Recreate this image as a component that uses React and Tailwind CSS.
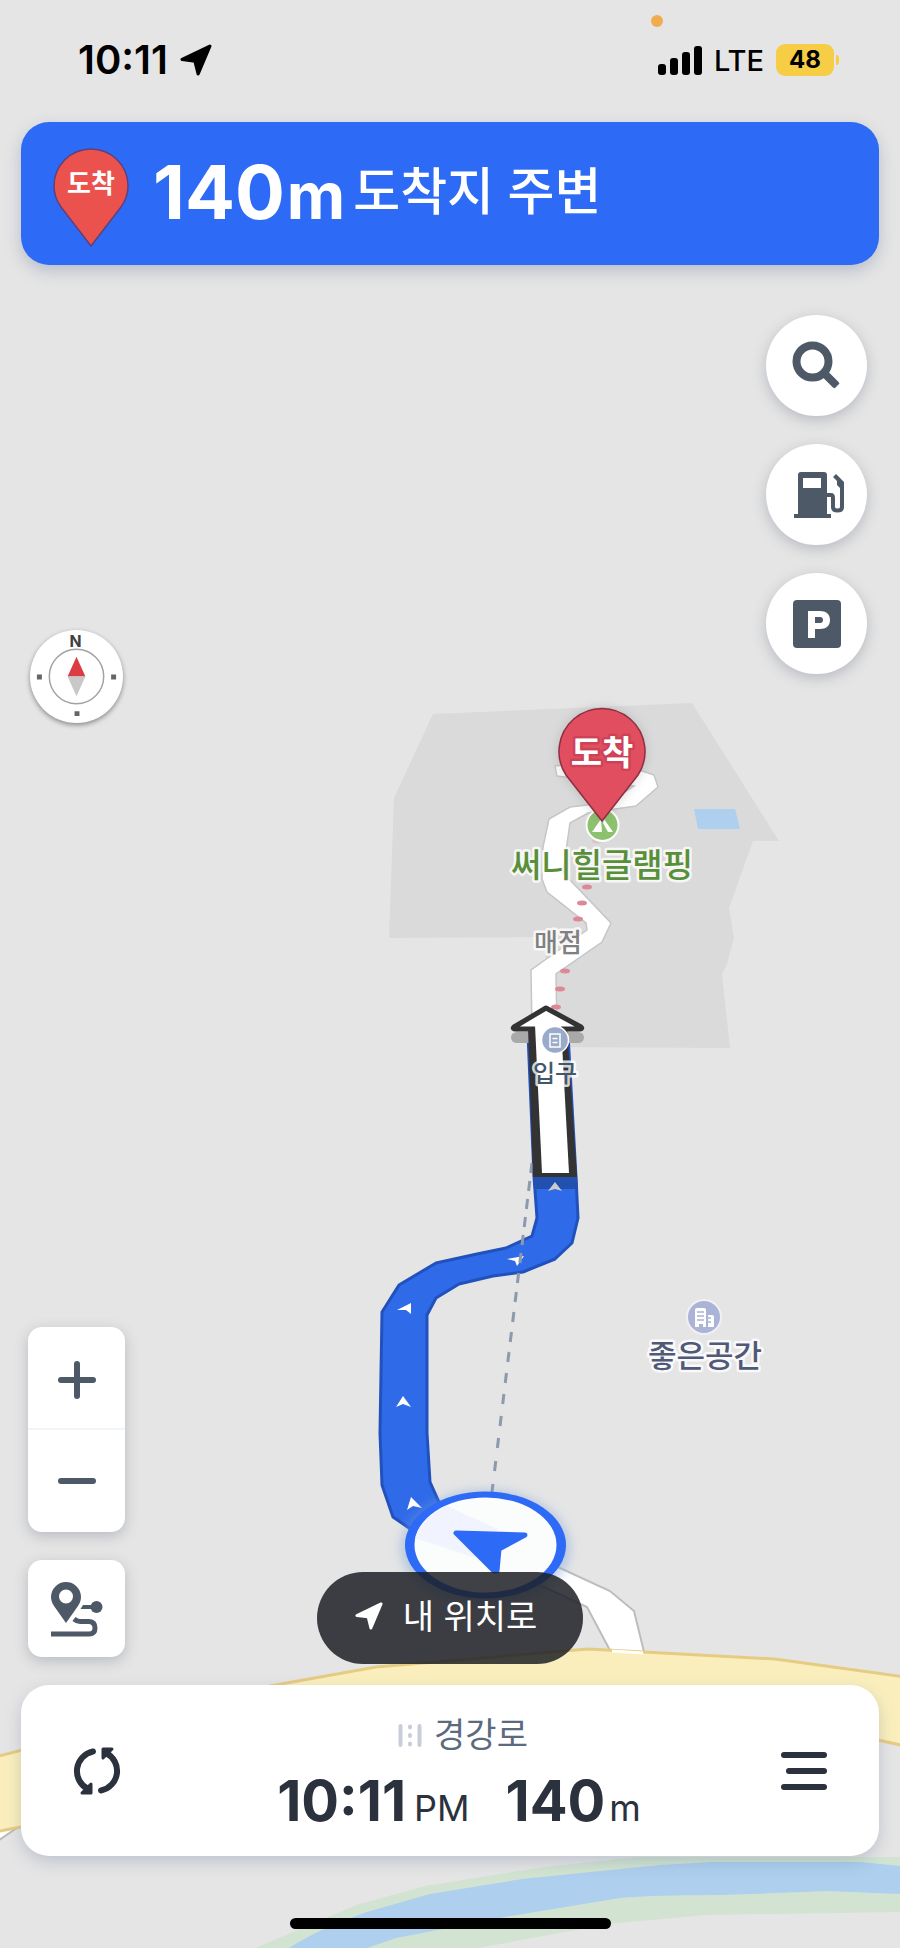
const DASHES = [
  1163, 1181, 1199, 1217, 1235, 1253, 1273, 1292, 1312, 1332, 1352, 1373, 1394,
  1416, 1438, 1461, 1484,
];

const TRAIL_DOTS = [
  [597, 841, 0.25],
  [592, 858, 0.15],
  [587, 887, 1],
  [582, 903, 1],
  [578, 919, 1],
  [573, 936, 0.35],
  [570, 953, 0.35],
  [565, 971, 1],
  [560, 989, 1],
  [556, 1007, 1],
];

const dashX = (y) => 532 - ((y - 1163) * 40) / 329;

function MapLabel({ x, y, size, color, weight, halo = '#ffffff', children }) {
  return (
    <text
      x={x}
      y={y}
      textAnchor="middle"
      fontSize={size}
      fontWeight={weight || 500}
      fill={color}
      stroke={halo}
      strokeOpacity="0.8"
      strokeWidth="5"
      strokeLinejoin="round"
      paintOrder="stroke"
    >
      {children}
    </text>
  );
}

function MapCanvas() {
  return (
    <svg
      className="absolute inset-0 h-full w-full"
      viewBox="0 0 900 1948"
      preserveAspectRatio="xMidYMid slice"
    >
      <defs>
        <filter id="soft" x="-30%" y="-30%" width="160%" height="160%">
          <feGaussianBlur stdDeviation="6" />
        </filter>
        <clipPath id="position">
          <ellipse cx="485.5" cy="1545" rx="71" ry="47.5" />
        </clipPath>
      </defs>

      {/* Glamping site and pool */}
      <path
        d="M433 714L692 703L779 841H753L729 908L734 938L727 964L722 974L730 1048L548 1047L545 937L389 938L394 798Z"
        fill="#dadada"
      />
      <path d="M694 809H735L740 829H698Z" fill="#aecfee" />

      {/* River */}
      <path
        d="M255 1948L356 1905L425 1886L545 1867L637 1857H900V1912L706 1915L608 1924L479 1948Z"
        fill="#d2e4d1"
      />
      <path
        d="M289 1948Q320 1928 367 1912L430 1894L522 1879L660 1865L712 1862H861L900 1866V1894L827 1891L723 1895Q650 1895 620 1898L505 1917L396 1938L367 1948Z"
        fill="#aecfee"
      />

      {/* Side road */}
      <path
        d="M532 1030L531 970L587 930L586 923L547 892L542 879L543 847L549 819L570 807L587 805L614 799L634 786L620 784L557 776L555 766L575 764L642 771L654 775L658 787L636 806L615 809L588 813L570 823L563 872L570 880L611 923L602 942L556 974L557 1030Z"
        fill="#fff"
        stroke="#c6c6c6"
        strokeWidth="1.5"
      />
      <path
        d="M500 1566L520 1555L560 1568L610 1591L634 1611L645 1656H613L587 1607L542 1586Z"
        fill="#fff"
        stroke="#bdbdbd"
        strokeWidth="2"
      />
      <path d="M-5 1843L24 1823V1790H-5Z" fill="#fff" stroke="#bbb" strokeWidth="2" />

      {/* Main road */}
      <path
        d="M-5 1757L270 1686L376 1667L588 1649L775 1659L905 1677V1746L878 1740L500 1720L200 1770L21 1827L-5 1832Z"
        fill="#faefbc"
        stroke="#e6cb83"
        strokeWidth="3"
      />
      <path d="M612 1651L643 1653" stroke="#fff" strokeWidth="3" />

      {TRAIL_DOTS.map(([cx, cy, opacity]) => (
        <ellipse key={cy} cx={cx} cy={cy} rx="5" ry="2.5" fill="#de8797" opacity={opacity} />
      ))}

      {/* Route */}
      <path
        d="M528 1034L534 1177L537 1218L532 1236L506 1248L477 1254L436 1263L399 1285L382 1312L380 1433L382 1485L393 1517L409 1528L470 1550L500 1520L439 1502L430 1482L427 1433V1315L436 1298L459 1284L493 1276L523 1272L555 1259L572 1243L578 1218L576 1177L568 1034Z"
        fill="#2f6ae8"
        stroke="#2151bd"
        strokeWidth="3"
        strokeLinejoin="round"
      />
      <path d="M533 1176H577L578 1189H534Z" fill="#2250ae" />
      <g fill="#fff">
        <path d="M555 1182L562 1191L555 1189L548 1191Z" fill="#ccc" />
        <path d="M524 1256L507 1259L515 1261L517 1266Z" />
        <path d="M411 1303L411 1314L406 1310L397 1310Z" />
        <path d="M403 1396L411 1407L403 1404L396 1407Z" />
        <path d="M411 1497L407 1510L413 1506L422 1508Z" />
      </g>
      {DASHES.map((y) => (
        <line
          key={y}
          x1={dashX(y)}
          y1={y}
          x2={dashX(y + 10)}
          y2={y + 10}
          stroke="#8d99ad"
          strokeWidth="3"
        />
      ))}

      {/* Direction arrow */}
      <rect x="511" y="1032" width="73" height="11" rx="6" fill="#a9a9a9" />
      <path d="M528 1028L533 1177H577L567 1028Z" fill="#333" />
      <path
        d="M546 1008L514 1027Q512 1029 516 1029H579Q583 1029 581 1027Z"
        fill="#fff"
        stroke="#333"
        strokeWidth="5"
        strokeLinejoin="round"
      />
      <path d="M535 1025L542 1173H569L561 1025Z" fill="#fff" />
      <circle cx="555" cy="1040" r="13.5" fill="#9aaac9" stroke="#fff" strokeWidth="1.5" />
      <rect x="550" y="1034" width="10" height="13" fill="none" stroke="#fff" strokeWidth="1.5" />
      <path d="M552.5 1038.5H557.5M552.5 1042.5H557.5" stroke="#fff" strokeWidth="1.5" />
      <MapLabel x={555} y={1082} size={24} color="#44576a">
        입구
      </MapLabel>
      <MapLabel x={558} y={952} size={26} color="#808080">
        매점
      </MapLabel>

      {/* Destination */}
      <circle cx="602.5" cy="825" r="16" fill="#8cc26d" stroke="#fff" strokeWidth="2" />
      <path d="M592 832L601 819L602 832ZM604 819L613 832H608L603 823Z" fill="#fff" />
      <MapLabel x={602} y={877} size={33} color="#588f38">
        써니힐글램핑
      </MapLabel>
      <path
        d="M602 821L566 775A43 43 0 1 1 638 775Z"
        fill="#777"
        opacity="0.35"
        filter="url(#soft)"
      />
      <path
        d="M602 821L566 775A43 43 0 1 1 638 775Z"
        fill="#e04e60"
        stroke="#8e2f41"
        strokeWidth="1.5"
      />
      <MapLabel x={602} y={765} size={34} color="#fff" weight={700} halo="#c93f54">
        도착
      </MapLabel>

      {/* Place */}
      <circle cx="704" cy="1317" r="17" fill="#abb3d6" stroke="#f0f0f5" strokeWidth="2" />
      <path
        d="M695 1310Q695 1308 697 1308H704Q706 1308 706 1310V1327H703V1324H699V1327H695ZM708 1315H712Q714 1315 714 1317V1327H708Z"
        fill="#fff"
      />
      <path
        d="M697 1312H704M697 1316H704M697 1320H704M708 1318H711M708 1322H711"
        stroke="#abb3d6"
        strokeWidth="1.5"
      />
      <MapLabel x={705} y={1367} size={31} color="#505a78">
        좋은공간
      </MapLabel>

      {/* Current position */}
      <ellipse cx="485.5" cy="1548" rx="84" ry="57" fill="#7a9fd8" opacity="0.5" filter="url(#soft)" />
      <ellipse cx="485.5" cy="1545" rx="80.5" ry="53.5" fill="#2d6af5" />
      <ellipse cx="485.5" cy="1545" rx="71" ry="47.5" fill="#fbfdfd" />
      <path
        d="M433 1500L498 1529L475 1558L412 1537Z"
        fill="#f1f4fe"
        clipPath="url(#position)"
      />
      <path
        d="M456 1533L525 1535L499 1549L497 1571H494Z"
        fill="#2d6af5"
        stroke="#2d6af5"
        strokeWidth="5"
        strokeLinejoin="round"
      />
    </svg>
  );
}

function NavigationIcon({ className }) {
  return (
    <svg className={className} viewBox="0 0 30 30" fill="currentColor">
      <path
        d="M28 2L2 14.5L14 16L17 28Z"
        stroke="currentColor"
        strokeWidth="3"
        strokeLinejoin="round"
      />
    </svg>
  );
}

function StatusBar() {
  return (
    <header className="relative flex h-[120px] items-center justify-between pr-[61px] pl-[78px] text-black">
      <div className="flex items-center gap-3">
        <time className="text-[40px] leading-none font-semibold">10:11</time>
        <NavigationIcon className="h-8 w-8" />
      </div>
      <span className="absolute top-[15px] left-[73%] h-3 w-3 -translate-x-1/2 rounded-full bg-[#efad4f]" />
      <div className="flex items-center">
        <div className="flex h-[29px] items-end gap-[4px]">
          <span className="h-[11px] w-[8px] rounded-[3px] bg-black" />
          <span className="h-[17px] w-[8px] rounded-[3px] bg-black" />
          <span className="h-[23px] w-[8px] rounded-[3px] bg-black" />
          <span className="h-[29px] w-[8px] rounded-[3px] bg-black" />
        </div>
        <span className="ml-3 text-[29px] leading-none font-medium">LTE</span>
        <span className="ml-3 flex h-8 w-[58px] items-center justify-center rounded-[9px] bg-[#f6cd45] text-[24px] leading-none font-bold">
          48
        </span>
        <span className="ml-[2px] h-[10px] w-[3px] rounded-r-full bg-[#f6cd45]" />
      </div>
    </header>
  );
}

function GuideBanner() {
  return (
    <section className="mx-[21px] mt-[2px] flex h-[143px] items-center rounded-[28px] bg-[#2d6af6] pl-8 text-white shadow-[0_6px_16px_rgba(80,100,140,0.3)]">
      <svg className="mt-2 h-[99px] w-[76px]" viewBox="0 0 76 99">
        <path
          d="M38 98L8 59C3 52 1 45 1 38A37 37 0 0 1 75 38C75 45 73 52 68 59Z"
          fill="#eb524e"
          stroke="#604078"
          strokeWidth="1.5"
        />
        <text x="38" y="45" textAnchor="middle" fontSize="26" fontWeight="700" fill="#fff">
          도착
        </text>
      </svg>
      <p className="ml-6 flex items-center pb-1 leading-none">
        <span className="flex items-baseline">
          <strong className="text-[74px] leading-none font-bold">140</strong>
          <span className="ml-[2px] text-[64px] leading-none font-bold">m</span>
        </span>
        <span className="ml-2 text-[51px] leading-none font-medium">도착지 주변</span>
      </p>
    </section>
  );
}

function RoundButton({ label, children }) {
  return (
    <button
      type="button"
      aria-label={label}
      className="flex h-[101px] w-[101px] items-center justify-center rounded-full bg-white text-[#4e5968] shadow-[0_4px_14px_rgba(80,90,110,0.3)]"
    >
      {children}
    </button>
  );
}

function MapButtons() {
  return (
    <div className="flex flex-col gap-7 pt-[50px] pr-[33px]">
      <RoundButton label="검색">
        <svg className="h-[50px] w-[50px]" viewBox="0 0 50 50" fill="none" stroke="currentColor">
          <circle cx="20.5" cy="20.5" r="16" strokeWidth="8" />
          <path d="M32 32L44 44" strokeWidth="8" />
          <path d="M43 43L45 45" strokeWidth="7" strokeLinejoin="round" />
        </svg>
      </RoundButton>
      <RoundButton label="주유소">
        <svg className="ml-1 h-[48px] w-[52px]" viewBox="0 0 52 48" fill="currentColor">
          <path
            fillRule="evenodd"
            d="M5 4Q5 1 8 1H31Q34 1 34 4V43H38V47H1V43H5ZM10 7V17H28V7Z"
          />
          <path
            d="M34 24H38Q40 24 40 27V36Q40 39.5 44.5 39.5T49 36V11"
            fill="none"
            stroke="currentColor"
            strokeWidth="4"
          />
          <path d="M40 6L43 3L51 11V22H47V17L44 14V10Z" />
        </svg>
      </RoundButton>
      <RoundButton label="주차장">
        <svg className="h-[50px] w-[50px]" viewBox="0 0 50 50">
          <rect x="1" y="1" width="48" height="48" rx="4" fill="currentColor" />
          <path
            fillRule="evenodd"
            fill="#fff"
            d="M16 12H28C34 12 38 15 38 21S34 30 28 30H23V39H16ZM23 18V24H28Q31 24 31 21T28 18Z"
          />
        </svg>
      </RoundButton>
    </div>
  );
}

function Compass() {
  return (
    <button
      type="button"
      aria-label="나침반"
      className="mt-[365px] h-[93px] w-[93px] rounded-full bg-white shadow-[0_2px_5px_rgba(0,0,0,0.4)]"
    >
      <svg className="h-full w-full" viewBox="0 0 94 94">
        <circle cx="47" cy="47" r="27.5" fill="none" stroke="#a3a3a3" strokeWidth="1.5" />
        <path d="M47 27L56 47H38Z" fill="#db3c42" />
        <path d="M47 67L56 47H38Z" fill="#c8c8c8" />
        <path d="M7 45h5v5h-5zM82 45h5v5h-5zM45 82h5v5h-5z" fill="#666" />
        <text x="46" y="17" textAnchor="middle" fontSize="16" fontWeight="700" fill="#3f3f3f">
          N
        </text>
      </svg>
    </button>
  );
}

function ZoomControls() {
  return (
    <div className="mt-auto flex w-[97px] flex-col divide-y-2 divide-[#f1f4f8] rounded-[14px] bg-white text-[#4e5968] shadow-[0_4px_14px_rgba(80,90,110,0.3)]">
      <button type="button" aria-label="확대" className="flex h-[103px] items-center justify-center pt-1">
        <svg className="h-[40px] w-[40px]" viewBox="0 0 40 40">
          <path d="M20 4V36M4 20H36" stroke="currentColor" strokeWidth="6" strokeLinecap="round" />
        </svg>
      </button>
      <button type="button" aria-label="축소" className="flex h-[102px] items-center justify-center">
        <svg className="h-[40px] w-[40px]" viewBox="0 0 40 40">
          <path d="M4 20H36" stroke="currentColor" strokeWidth="6" strokeLinecap="round" />
        </svg>
      </button>
    </div>
  );
}

function RouteButton() {
  return (
    <button
      type="button"
      aria-label="전체 경로"
      className="mt-7 flex h-[97px] w-[97px] items-center justify-center rounded-[14px] bg-white text-[#4e5968] shadow-[0_4px_14px_rgba(80,90,110,0.3)]"
    >
      <svg className="h-[56px] w-[54px]" viewBox="0 0 54 56" fill="currentColor">
        <path
          fillRule="evenodd"
          d="M16 42L4 25C2 22 1 19 1 16A15 15 0 0 1 31 16C31 19 30 22 28 25ZM16 8.5A7 7 0 1 0 16 22.5A7 7 0 1 0 16 8.5Z"
        />
        <path d="M33 24H42V28H30.5Z" />
        <circle cx="46.5" cy="26" r="6" />
        <path
          d="M24 38Q27 40.5 30 40.5H39Q45 41 45 47T39 53H1"
          fill="none"
          stroke="currentColor"
          strokeWidth="5"
        />
      </svg>
    </button>
  );
}

function TripCard() {
  return (
    <section className="mx-[21px] flex h-[171px] items-center justify-between rounded-[28px] bg-white pr-[52px] pl-[52px] text-[#2b313d] shadow-[0_6px_16px_rgba(80,100,140,0.25)]">
      <button type="button" aria-label="경로 새로고침">
        <svg className="h-12 w-12" viewBox="0 0 48 48" fill="none" stroke="currentColor">
          <path
            d="M20 4.5A20 20 0 0 0 15 42M28 43.5A20 20 0 0 0 33 6"
            strokeWidth="6"
            strokeLinecap="round"
          />
          <path
            d="M18 37V46H9ZM30 11V2H39Z"
            fill="currentColor"
            strokeWidth="3"
            strokeLinejoin="round"
          />
        </svg>
      </button>
      <div className="flex flex-col items-center gap-4 pl-4">
        <div className="flex items-center gap-3 pl-2 text-[34px] leading-[44px] text-[#5c6a80]">
          <svg className="h-6 w-6" viewBox="0 0 24 24" stroke="#c8ced9" strokeLinecap="round">
            <path
              d="M2.5 3V22M21.5 3V22M12 3.5V4.5M12 12V13M12 20.5V21.5"
              strokeWidth="4"
            />
          </svg>
          <span>경강로</span>
        </div>
        <div className="flex items-baseline leading-none">
          <strong className="text-[56px] leading-none font-bold">10:11</strong>
          <span className="ml-2 text-[36px] leading-none">PM</span>
          <strong className="ml-9 text-[56px] leading-none font-bold">140</strong>
          <span className="ml-1 text-[36px] leading-none">m</span>
        </div>
      </div>
      <button type="button" aria-label="메뉴" className="flex flex-col items-end gap-[10px]">
        <span className="h-[6px] w-[46px] rounded-full bg-current" />
        <span className="h-[6px] w-[41px] rounded-full bg-current" />
        <span className="h-[6px] w-[46px] rounded-full bg-current" />
      </button>
    </section>
  );
}

export default function App() {
  return (
    <div
      lang="ko"
      className="relative flex min-h-screen flex-col overflow-hidden bg-[#e5e5e5] font-['Inter','Noto_Sans_CJK_KR',sans-serif]"
    >
      <MapCanvas />
      <div className="relative flex flex-1 flex-col">
        <StatusBar />
        <GuideBanner />
        <main className="grid flex-1 grid-cols-[1fr_auto_1fr]">
          <div className="ml-7 flex w-fit flex-col items-center pb-7">
            <Compass />
            <ZoomControls />
            <RouteButton />
          </div>
          <div className="flex items-end pb-[21px]">
            <button
              type="button"
              className="flex h-[92px] w-[266px] items-center justify-center gap-5 rounded-full bg-[#1d2026]/85 pr-2 pb-1 text-[34px] text-white"
            >
              <NavigationIcon className="h-7 w-7" />
              내 위치로
            </button>
          </div>
          <div className="flex items-start justify-end">
            <MapButtons />
          </div>
        </main>
        <TripCard />
        <footer className="flex h-[92px] items-end justify-center pb-[19px]">
          <span className="h-[11px] w-[321px] rounded-full bg-black" />
        </footer>
      </div>
    </div>
  );
}
